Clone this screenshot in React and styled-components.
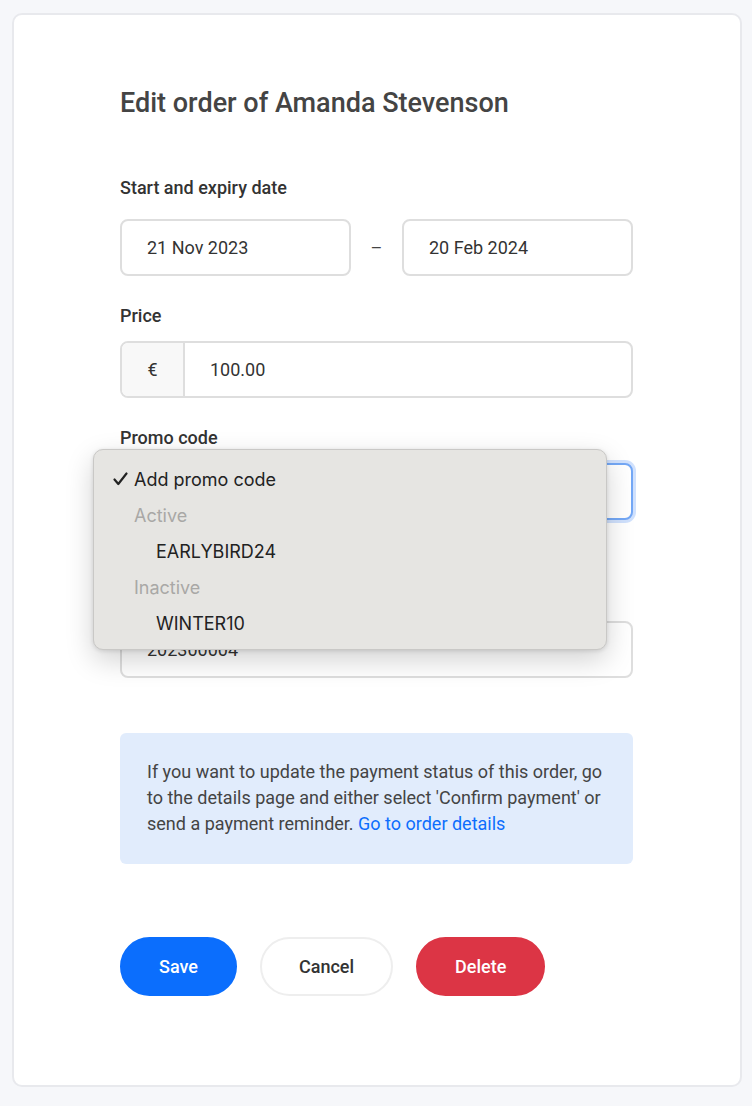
import React from "react";
import styled, { createGlobalStyle } from "styled-components";

const Global = createGlobalStyle`
  html, body { margin: 0; padding: 0; background: #f6f7fa; }
  body { font-family: Roboto, "Noto Sans", Arial, sans-serif; color: #333; }
  * { box-sizing: border-box; }
`;

const Page = styled.div`
  padding: 13px 10px 19px 12px;
`;

const Card = styled.div`
  background: #fff;
  border: 2px solid #e8e9ed;
  border-radius: 10px;
  padding: 73px 107px 89px 106px;
`;

const Title = styled.h1`
  margin: 0;
  font-size: 27px;
  line-height: 30px;
  font-weight: 500;
  color: #444;
`;

const Group = styled.div`
  position: relative;
  margin-top: ${(p) => p.$mt}px;
`;

const Label = styled.div`
  font-size: 18px;
  line-height: 20px;
  font-weight: 500;
  color: #333;
  margin-bottom: ${(p) => p.$mb}px;
`;

const DateRow = styled.div`
  display: flex;
  align-items: center;
`;

const Field = styled.div`
  flex: 1;
  height: 57px;
  border: 2px solid ${(p) => (p.$focus ? "#74a8f6" : "#dedede")};
  border-radius: 8px;
  display: flex;
  align-items: center;
  padding: 0 25px;
  font-size: 18px;
  color: #333;
  background: #fff;
  box-shadow: ${(p) => (p.$focus ? "0 0 0 3px rgba(120,170,250,0.35)" : "none")};
`;

const Dash = styled.div`
  width: 51px;
  text-align: center;
  font-size: 18px;
  color: #444;
`;

const PriceField = styled.div`
  display: flex;
  height: 57px;
  border: 2px solid #dedede;
  border-radius: 8px;
  overflow: hidden;
`;

const Addon = styled.div`
  width: 63px;
  background: #f8f8f8;
  border-right: 2px solid #dedede;
  display: flex;
  align-items: center;
  justify-content: center;
  font-size: 18px;
  color: #333;
`;

const PriceValue = styled.div`
  flex: 1;
  display: flex;
  align-items: center;
  padding-left: 25px;
  font-size: 18px;
  color: #333;
`;

const Menu = styled.div`
  position: absolute;
  top: 21px;
  left: -27px;
  width: 514px;
  height: 201px;
  background: #e6e5e2;
  border: 1px solid #c9c8c6;
  border-radius: 10px;
  box-shadow: 0 10px 28px rgba(0, 0, 0, 0.18), 0 1px 4px rgba(0, 0, 0, 0.12);
  padding: 11px 0 9px;
  z-index: 10;
  font-family: Inter, "Noto Sans", sans-serif;
`;

const MenuItem = styled.div`
  height: 36px;
  display: flex;
  align-items: center;
  font-size: 18px;
  color: ${(p) => (p.$muted ? "#a9a8a6" : "#222")};
  padding-left: ${(p) => p.$indent}px;
`;

const CheckIcon = styled.svg`
  width: 15px;
  height: 14px;
  margin-right: 6px;
  flex: none;
`;

const Info = styled.div`
  margin-top: 55px;
  background: #e1ecfc;
  border-radius: 6px;
  padding: 26px 26px 27px 27px;
  font-size: 18px;
  line-height: 26px;
  color: #444;
`;

const Link = styled.a`
  color: #0d6efd;
  text-decoration: none;
`;

const Buttons = styled.div`
  margin-top: 73px;
  display: flex;
  gap: 23px;
`;

const Button = styled.button`
  height: 59px;
  padding: 0 37px;
  border-radius: 30px;
  font-family: Roboto, sans-serif;
  font-size: 18px;
  font-weight: 500;
  cursor: pointer;
  border: 2px solid ${(p) => p.$border};
  background: ${(p) => p.$bg};
  color: ${(p) => p.$color};
`;

export default function App() {
  return (
    <>
      <Global />
      <Page>
        <Card>
          <Title>Edit order of Amanda Stevenson</Title>

          <Group $mt={60}>
            <Label $mb={21}>Start and expiry date</Label>
            <DateRow>
              <Field>21 Nov 2023</Field>
              <Dash>–</Dash>
              <Field>20 Feb 2024</Field>
            </DateRow>
          </Group>

          <Group $mt={30}>
            <Label $mb={15}>Price</Label>
            <PriceField>
              <Addon>€</Addon>
              <PriceValue>100.00</PriceValue>
            </PriceField>
          </Group>

          <Group $mt={30}>
            <Label $mb={15}>Promo code</Label>
            <Field $focus>Add promo code</Field>
            <Menu>
              <MenuItem $indent={19}>
                <CheckIcon viewBox="0 0 15 14" aria-hidden="true">
                  <path
                    d="M1.5 7.5 L5.3 12 L13.5 1.5"
                    fill="none"
                    stroke="#222"
                    strokeWidth="2.2"
                    strokeLinecap="round"
                    strokeLinejoin="round"
                  />
                </CheckIcon>
                Add promo code
              </MenuItem>
              <MenuItem $indent={40} $muted>Active</MenuItem>
              <MenuItem $indent={62}>EARLYBIRD24</MenuItem>
              <MenuItem $indent={40} $muted>Inactive</MenuItem>
              <MenuItem $indent={62}>WINTER10</MenuItem>
            </Menu>
          </Group>

          <Group $mt={66}>
            <Label $mb={15}>Invoice number</Label>
            <Field>202300004</Field>
          </Group>

          <Info>
            If you want to update the payment status of this order, go to the
            details page and either select 'Confirm payment' or send a payment
            reminder. <Link href="#">Go to order details</Link>
          </Info>

          <Buttons>
            <Button $bg="#0b6efd" $border="#0b6efd" $color="#fff">
              Save
            </Button>
            <Button $bg="#fff" $border="#eeeeee" $color="#333">
              Cancel
            </Button>
            <Button $bg="#dc3545" $border="#dc3545" $color="#fff">
              Delete
            </Button>
          </Buttons>
        </Card>
      </Page>
    </>
  );
}
